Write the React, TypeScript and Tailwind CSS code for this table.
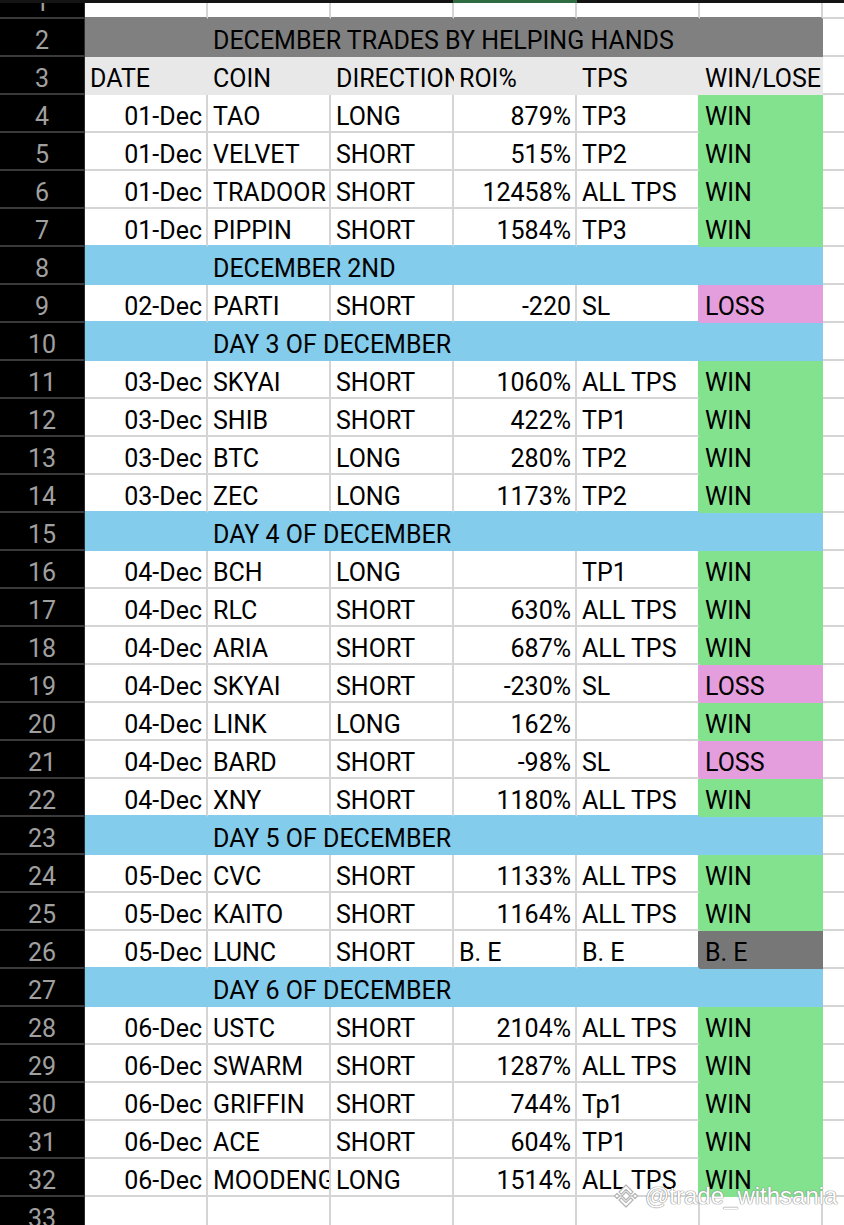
import React from "react";

type Fill = "w" | "g" | "p" | "e" | "b" | "t" | "h";

const BG: Record<Fill, string> = {
  w: "bg-white",
  g: "bg-[#83e28e]",
  p: "bg-[#e59edd]",
  e: "bg-[#777777]",
  b: "bg-[#83cceb]",
  t: "bg-[#808080]",
  h: "bg-[#e8e8e8]",
};
const BR: Record<Fill, string> = {
  w: "border-r-[#d5d5d5]",
  g: "border-r-[#83e28e]",
  p: "border-r-[#e59edd]",
  e: "border-r-[#777777]",
  b: "border-r-[#83cceb]",
  t: "border-r-[#808080]",
  h: "border-r-[#e8e8e8]",
};
const BB: Record<Fill, string> = {
  w: "border-b-[#d5d5d5]",
  g: "border-b-[#83e28e]",
  p: "border-b-[#e59edd]",
  e: "border-b-[#777777]",
  b: "border-b-[#83cceb]",
  t: "border-b-[#808080]",
  h: "border-b-[#e8e8e8]",
};

type CellData = { text?: string; align?: "l" | "r" };
type Row =
  | { kind: "empty" }
  | { kind: "title"; text: string }
  | { kind: "header" }
  | { kind: "section"; text: string }
  | { kind: "data"; cells: CellData[]; res: Fill };

const d = (
  date: string,
  coin: string,
  dir: string,
  roi: string,
  tp: string,
  res: string,
  roiLeft = false
): Row => ({
  kind: "data",
  cells: [
    { text: date, align: "r" },
    { text: coin, align: "l" },
    { text: dir, align: "l" },
    { text: roi, align: roiLeft ? "l" : "r" },
    { text: tp, align: "l" },
    { text: res, align: "l" },
  ],
  res: res === "WIN" ? "g" : res === "LOSS" ? "p" : "e",
});

const rows: Row[] = [
  { kind: "empty" },
  { kind: "title", text: "DECEMBER TRADES BY HELPING HANDS" },
  { kind: "header" },
  d("01-Dec", "TAO", "LONG", "879%", "TP3", "WIN"),
  d("01-Dec", "VELVET", "SHORT", "515%", "TP2", "WIN"),
  d("01-Dec", "TRADOOR", "SHORT", "12458%", "ALL TPS", "WIN"),
  d("01-Dec", "PIPPIN", "SHORT", "1584%", "TP3", "WIN"),
  { kind: "section", text: "DECEMBER 2ND" },
  d("02-Dec", "PARTI", "SHORT", "-220", "SL", "LOSS"),
  { kind: "section", text: "DAY 3 OF DECEMBER" },
  d("03-Dec", "SKYAI", "SHORT", "1060%", "ALL TPS", "WIN"),
  d("03-Dec", "SHIB", "SHORT", "422%", "TP1", "WIN"),
  d("03-Dec", "BTC", "LONG", "280%", "TP2", "WIN"),
  d("03-Dec", "ZEC", "LONG", "1173%", "TP2", "WIN"),
  { kind: "section", text: "DAY 4 OF DECEMBER" },
  d("04-Dec", "BCH", "LONG", "", "TP1", "WIN"),
  d("04-Dec", "RLC", "SHORT", "630%", "ALL TPS", "WIN"),
  d("04-Dec", "ARIA", "SHORT", "687%", "ALL TPS", "WIN"),
  d("04-Dec", "SKYAI", "SHORT", "-230%", "SL", "LOSS"),
  d("04-Dec", "LINK", "LONG", "162%", "", "WIN"),
  d("04-Dec", "BARD", "SHORT", "-98%", "SL", "LOSS"),
  d("04-Dec", "XNY", "SHORT", "1180%", "ALL TPS", "WIN"),
  { kind: "section", text: "DAY 5 OF DECEMBER" },
  d("05-Dec", "CVC", "SHORT", "1133%", "ALL TPS", "WIN"),
  d("05-Dec", "KAITO", "SHORT", "1164%", "ALL TPS", "WIN"),
  d("05-Dec", "LUNC", "SHORT", "B. E", "B. E", "B. E", true),
  { kind: "section", text: "DAY 6 OF DECEMBER" },
  d("06-Dec", "USTC", "SHORT", "2104%", "ALL TPS", "WIN"),
  d("06-Dec", "SWARM", "SHORT", "1287%", "ALL TPS", "WIN"),
  d("06-Dec", "GRIFFIN", "SHORT", "744%", "Tp1", "WIN"),
  d("06-Dec", "ACE", "SHORT", "604%", "TP1", "WIN"),
  d("06-Dec", "MOODENG", "LONG", "1514%", "ALL TPS", "WIN"),
  { kind: "empty" },
];

const fillsOf = (r: Row | undefined): Fill[] => {
  if (!r) return ["w", "w", "w", "w", "w", "w"];
  switch (r.kind) {
    case "empty":
      return ["w", "w", "w", "w", "w", "w"];
    case "title":
      return ["t", "t", "t", "t", "t", "t"];
    case "header":
      return ["h", "h", "h", "h", "h", "h"];
    case "section":
      return ["b", "b", "b", "b", "b", "b"];
    case "data":
      return ["w", "w", "w", "w", "w", r.res];
  }
};

const NumCell = ({ n }: { n: number }) => (
  <div className="w-[85px] shrink-0 h-[38px] bg-black border-b-2 border-b-[#3a3a3a] border-r border-r-[#2c2c2c] flex items-center justify-center pt-[6px] text-[#a0a0a0]">
    {n}
  </div>
);

const GCell = () => (
  <div className="w-[123px] shrink-0 h-[38px] bg-white border-b-2 border-b-[#d5d5d5] border-r-2 border-r-[#d5d5d5]" />
);

const Watermark = () => (
  <div className="absolute left-[610px] top-[1181px] flex items-center gap-[3px] pointer-events-none font-['Liberation_Sans',sans-serif] text-[24px] leading-[30px] text-white">
    <svg width="32" height="30" viewBox="0 0 30 30" className="shrink-0">
      <g fill="#ffffff" stroke="#b4b4b4" strokeWidth="1.2" strokeLinejoin="round">
        <polygon points="15,11 19,15 15,19 11,15" />
        <polygon points="6,12.5 8.5,15 6,17.5 3.5,15" />
        <polygon points="24,12.5 26.5,15 24,17.5 21.5,15" />
        <polygon points="15,4 22,11 19.8,13.2 15,8.4 10.2,13.2 8,11" />
        <polygon points="15,26 22,19 19.8,16.8 15,21.6 10.2,16.8 8,19" />
      </g>
    </svg>
    <div className="whitespace-nowrap [text-shadow:0_0_1px_#8a8a8a,0_0_1px_#8a8a8a,0_0_1px_#8a8a8a]">
      @trade_withsania
    </div>
  </div>
);

export default function App() {
  return (
    <div className="relative w-[844px] h-[1225px] overflow-hidden bg-white font-[Roboto,sans-serif] text-[25px] leading-[29px] text-black">
      <div className="-mt-[19px] flex flex-col">
        {rows.map((r, i) => {
          const n = i + 1;
          const fills = fillsOf(r);
          const below = fillsOf(rows[i + 1]);
          if (r.kind === "title" || r.kind === "section") {
            return (
              <div key={i} className="flex">
                <NumCell n={n} />
                <div
                  className={`w-[738px] shrink-0 h-[38px] ${BG[fills[0]]} border-b-2 ${BB[fills[0]]} flex items-center pt-[6px] pl-[128px] whitespace-nowrap`}
                >
                  {r.text}
                </div>
                <GCell />
              </div>
            );
          }
          if (r.kind === "header") {
            const hs = ["DATE", "COIN", "DIRECTION", "ROI%", "TPS", "WIN/LOSE"];
            return (
              <div key={i} className="flex">
                <NumCell n={n} />
                <div className="w-[738px] shrink-0 h-[38px] bg-[#e8e8e8] border-b-2 border-b-[#e8e8e8] flex">
                  {hs.map((h) => (
                    <div
                      key={h}
                      className="w-[123px] shrink-0 overflow-hidden whitespace-nowrap flex items-center pt-[6px] pl-[5px]"
                    >
                      {h}
                    </div>
                  ))}
                </div>
                <GCell />
              </div>
            );
          }
          const cells: CellData[] =
            r.kind === "data" ? r.cells : [{}, {}, {}, {}, {}, {}];
          return (
            <div key={i} className="flex">
              <NumCell n={n} />
              {cells.map((c, ci) => {
                const f = fills[ci];
                const right = ci < 5 ? fills[ci + 1] : "w";
                const rCls = f !== "w" ? BR[f] : right !== "w" ? BR[right] : BR.w;
                const bCls =
                  f !== "w" ? BB[f] : below[ci] !== "w" ? BB[below[ci]] : BB.w;
                return (
                  <div
                    key={ci}
                    className={`w-[123px] shrink-0 h-[38px] ${BG[f]} border-r-2 border-b-2 ${rCls} ${bCls} overflow-hidden whitespace-nowrap flex items-center pt-[6px] ${
                      c.align === "r" ? "justify-end pr-[4px]" : "justify-start pl-[5px]"
                    }`}
                  >
                    {c.text}
                  </div>
                );
              })}
              <GCell />
            </div>
          );
        })}
      </div>
      <div className="absolute top-0 left-0 w-full h-[3px] bg-[#141414]">
        <div className="absolute top-0 left-[453px] w-[124px] h-[3px] bg-[#2e6b40]" />
      </div>
      <Watermark />
    </div>
  );
}
